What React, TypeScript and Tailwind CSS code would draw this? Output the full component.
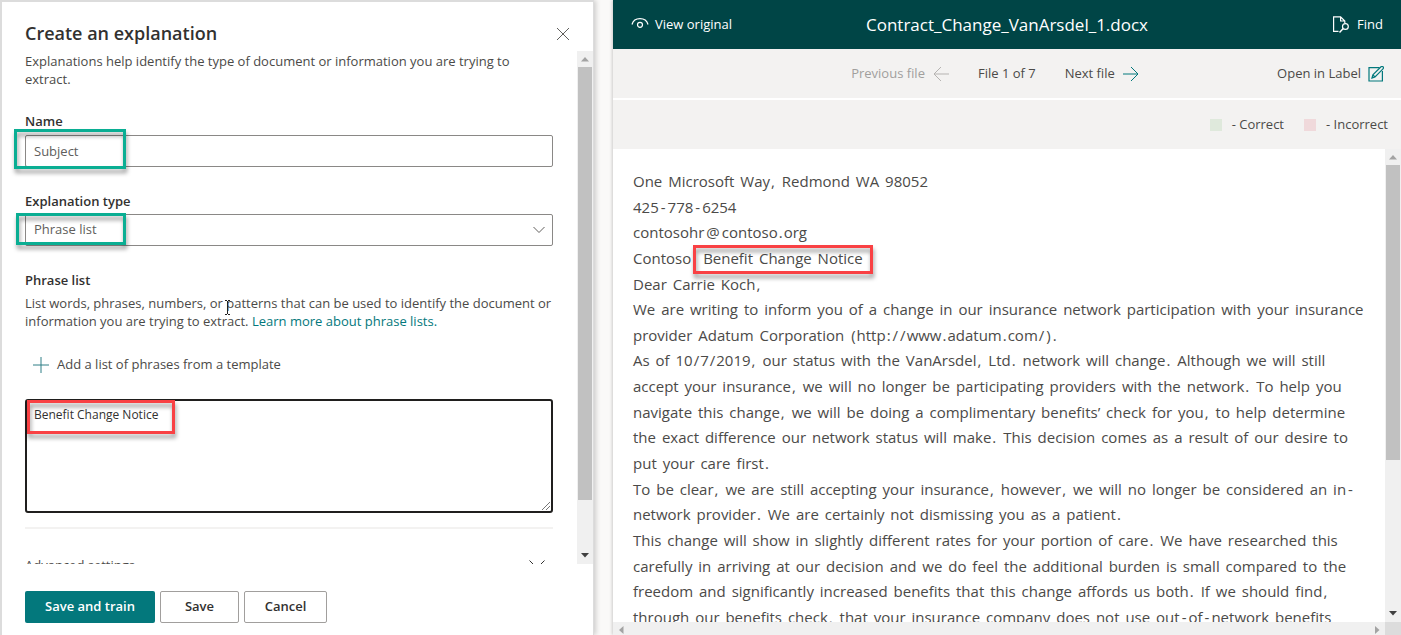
import type { ReactNode } from "react";

const LINES = [
  "One Microsoft Way, Redmond WA 98052",
  "425-778-6254",
  "contosohr@contoso.org",
  "Contoso [Benefit Change Notice]",
  "Dear Carrie Koch,",
  "We are writing to inform you of a change in our insurance network participation with your insurance",
  "provider Adatum Corporation (http://www.adatum.com/).",
  "As of 10/7/2019, our status with the VanArsdel, Ltd. network will change. Although we will still",
  "accept your insurance, we will no longer be participating providers with the network. To help you",
  "navigate this change, we will be doing a complimentary benefits’ check for you, to help determine",
  "the exact difference our network status will make. This decision comes as a result of our desire to",
  "put your care first.",
  "To be clear, we are still accepting your insurance, however, we will no longer be considered an in-",
  "network provider. We are certainly not dismissing you as a patient.",
  "This change will show in slightly different rates for your portion of care. We have researched this",
  "carefully in arriving at our decision and we do feel the additional burden is small compared to the",
  "freedom and significantly increased benefits that this change affords us both. If we should find,",
  "through our benefits check, that your insurance company does not use out-of-network benefits",
];

/** Marks a region with a coloured frame drawn over the content. */
function Callout({ className }: { className: string }) {
  return (
    <span
      aria-hidden="true"
      className={`pointer-events-none absolute border-3 drop-shadow-[1px_4px_2px_rgba(0,0,0,0.4)] ${className}`}
    />
  );
}

/** Splits a word so that its punctuation marks become tokens of their own. */
function Word({ text }: { text: string }) {
  return (
    <span className="mr-0.5">
      {text
        .split(/([-@/.,:()])/)
        .filter(Boolean)
        .map((part, i) =>
          /^[-@]$/.test(part) ? (
            <span key={i} className="mx-0.5">{part}</span>
          ) : /^[/.,:()]$/.test(part) ? (
            <span key={i} className="mx-px">{part}</span>
          ) : (
            part
          ),
        )}
    </span>
  );
}

function words(text: string): ReactNode[] {
  return text
    .split(" ")
    .filter(Boolean)
    .flatMap((w, i) => (i ? [" ", <Word key={i} text={w} />] : [<Word key={i} text={w} />]));
}

function Line({ text }: { text: string }) {
  const marked = text.match(/^(.*)\[(.*)\]$/);
  if (!marked) return <p>{words(text)}</p>;
  return (
    <p>
      {words(marked[1])}{" "}
      <span className="relative ml-1.5 inline-block">
        {words(marked[2])}
        <Callout className="-right-2 -left-2.5 -top-px -bottom-0.5 border-[#f94144]" />
      </span>
    </p>
  );
}

function Arrow({ d, className }: { d: string; className: string }) {
  return (
    <svg viewBox="0 0 16 16" className={`size-4 shrink-0 ${className}`} fill="currentColor" aria-hidden="true">
      <path d={d} />
    </svg>
  );
}

const UP = "M4 10.5 8 6l4 4.500z";
const DOWN = "M4 5 12 5 8 9.500z";
const LEFT = "M10.500 4v8L6 8z";
const RIGHT = "M6 4v8l4.500-4z";

function VerticalScrollbar({ thumb }: { thumb: string }) {
  return (
    <div className="flex w-4 shrink-0 flex-col bg-[#f0f0f0]" aria-hidden="true">
      <Arrow d={UP} className="text-[#a3a3a3]" />
      <div className={`mx-px bg-[#c1c1c1] ${thumb}`} />
      <Arrow d={DOWN} className="mt-auto text-[#404040]" />
    </div>
  );
}

function ExplanationPanel() {
  return (
    <section className="flex w-[594px] shrink-0 flex-col border-t-2 border-r border-l-2 border-[#dcdcdc] bg-white shadow-[2px_0_5px_rgba(0,0,0,0.18)]">
      <header className="flex h-[49px] shrink-0 items-end justify-between pr-[21px] pb-1 pl-[23px]">
        <h1 className="text-[18px] leading-7 font-semibold text-[#323130]">Create an explanation</h1>
        <button type="button" aria-label="Close" className="mb-1 p-0.5 text-[#605e5c]">
          <svg viewBox="0 0 14 14" className="size-3.5" fill="none" stroke="currentColor" aria-hidden="true">
            <path d="M1 1l12 12M13 1L1 13" />
          </svg>
        </button>
      </header>

      <div className="flex min-h-0 flex-1">
        <div className="min-w-0 flex-1 overflow-hidden pr-6 pl-[23px]">
          <p className="pt-px leading-[18px]">
            Explanations help identify the type of document or information you are trying to extract.
          </p>

          <label htmlFor="name" className="mt-[23px] block leading-5 font-semibold text-[#323130]">
            Name
          </label>
          <div className="relative mt-1">
            <input
              id="name"
              defaultValue="Subject"
              className="block h-8 w-full rounded-xs border border-[#8a8886] bg-white px-2 text-[#605e5c] outline-none"
            />
            <Callout className="-top-1.5 -left-[11px] h-10 w-28 border-[#0aae93]" />
          </div>

          <label htmlFor="type" className="mt-6 block leading-5 font-semibold text-[#323130]">
            Explanation type
          </label>
          <div className="relative mt-[3px]">
            <select
              id="type"
              className="block h-8 w-full appearance-none rounded-xs border border-[#8a8886] bg-white px-2 text-[#605e5c] outline-none"
            >
              <option>Phrase list</option>
            </select>
            <svg
              viewBox="0 0 12 8"
              className="pointer-events-none absolute top-3 right-2 h-2 w-3"
              fill="none"
              stroke="#605e5c"
              aria-hidden="true"
            >
              <path d="M.5 1 6 6.500 11.500 1" />
            </svg>
            <Callout className="-top-px -left-[9px] h-8 w-[110px] border-[#0aae93]" />
          </div>

          <label htmlFor="phrases" className="mt-6 block leading-5 font-semibold text-[#323130]">
            Phrase list
          </label>
          <div className="relative mt-1">
            <p className="leading-[18px] whitespace-nowrap">
              List words, phrases, numbers, or patterns that can be used to identify the document or
              <br />
              information you are trying to extract.{" "}
              <a href="#phrase-lists" className="text-[#03787c]">
                Learn more about phrase lists.
              </a>
            </p>
            <svg
              viewBox="0 0 7 16"
              className="pointer-events-none absolute top-1.5 left-[199px] h-4 w-[7px]"
              fill="none"
              stroke="#222"
              aria-hidden="true"
            >
              <path d="M1 .5h2M4 .5h2M3.500 1v13M1 14.500h2M4 14.500h2" />
            </svg>
          </div>

          <button type="button" className="mt-[19px] flex h-8 items-center gap-2 px-2">
            <svg viewBox="0 0 16 16" className="size-4" fill="none" stroke="#2f7f86" aria-hidden="true">
              <path d="M8 0v16M0 8h16" />
            </svg>
            Add a list of phrases from a template
          </button>

          <div className="relative mt-[18px]">
            <textarea
              id="phrases"
              defaultValue="Benefit Change Notice"
              className="block h-[114px] w-full resize-none rounded-[3px] border-2 border-[#201f1e] bg-white px-[7px] py-[5px] text-[12px] leading-[18px] text-[#323130] outline-none"
            />
            <svg
              viewBox="0 0 10 10"
              className="pointer-events-none absolute right-0.5 bottom-0.5 size-2.5"
              fill="none"
              stroke="#777"
              aria-hidden="true"
            >
              <path d="M1 9 9 1M5 9 9 5" />
            </svg>
            <Callout className="top-px left-0.5 h-[34px] w-[148px] border-[#f94144]" />
          </div>

          <hr className="mt-3.5 border-t-2 border-[#f3f2f1]" />
          <button type="button" className="mt-[26px] flex w-full items-center justify-between pr-2 leading-5">
            Advanced settings
            <svg viewBox="0 0 16 10" className="h-2.5 w-4" fill="none" stroke="#323130" aria-hidden="true">
              <path d="M.5 .5 8 8l7.500-7.500" />
            </svg>
          </button>
        </div>
        <VerticalScrollbar thumb="h-[433px]" />
      </div>

      <footer className="flex h-[71px] shrink-0 items-start gap-[5px] pt-[27px] pl-[23px] font-semibold">
        <button type="button" className="h-8 rounded-xs bg-[#03787c] px-5 text-white">
          Save and train
        </button>
        <button type="button" className="h-8 w-[79px] rounded-xs border border-[#a19f9d] text-[#323130]">
          Save
        </button>
        <button type="button" className="h-8 w-[83px] rounded-xs border border-[#a19f9d] text-[#323130]">
          Cancel
        </button>
      </footer>
    </section>
  );
}

function DocumentViewer() {
  return (
    <section className="flex min-w-0 flex-1 flex-col bg-white shadow-[-1px_0_3px_rgba(0,0,0,0.18)]">
      <header className="grid h-[49px] shrink-0 grid-cols-[1fr_auto_1fr] items-center bg-[#004546] px-[18px] text-white">
        <button type="button" className="flex items-center gap-1.5 justify-self-start">
          <svg viewBox="0 0 18 16" className="h-4 w-[18px]" fill="none" stroke="currentColor" strokeWidth="1.200" aria-hidden="true">
            <path d="M1 7.500C2 3.800 5 1.600 9 1.600s7 2.200 8 5.900" />
            <circle cx="9" cy="7.800" r="2.500" />
          </svg>
          View original
        </button>
        <h2 className="text-[17px] leading-6">Contract_Change_VanArsdel_1.docx</h2>
        <button type="button" className="flex items-center gap-[7px] justify-self-end">
          <svg viewBox="0 0 18 18" className="size-[18px]" fill="none" stroke="currentColor" strokeWidth="1.200" aria-hidden="true">
            <path d="M6.500 15.400H1.600V.8h7l4.200 4.200v2M8.600.8V5h4.200" />
            <circle cx="13.400" cy="10.500" r="2.900" />
            <path d="M11.200 12.600 7.500 16.500" strokeWidth="1.500" />
          </svg>
          Find
        </button>
      </header>

      <nav className="grid h-[49px] shrink-0 grid-cols-[1fr_auto_1fr] items-center bg-[#f3f2f1] px-[17px]">
        <div className="col-start-2 flex items-center gap-[29px] pr-6">
          <button type="button" disabled className="flex items-center gap-2 text-[#a19f9d]">
            Previous file
            <svg viewBox="0 0 16 16" className="size-4" fill="none" stroke="#b5b3b1" aria-hidden="true">
              <path d="M16 8H1M8 1 1 8l7 7" />
            </svg>
          </button>
          <span>File 1 of 7</span>
          <button type="button" className="flex items-center gap-2">
            Next file
            <svg viewBox="0 0 16 16" className="size-4" fill="none" stroke="#03787c" aria-hidden="true">
              <path d="M0 8h15M8 1l7 7-7 7" />
            </svg>
          </button>
        </div>
        <button type="button" className="flex items-center gap-[7px] justify-self-end">
          Open in Label
          <svg viewBox="0 0 16 16" className="size-4" fill="none" stroke="#03787c" strokeWidth="1.200" aria-hidden="true">
            <path d="M11.500 1.600H1v13.400h13.400V5" />
            <path d="M4 12l.9-3.200L13 .8c.6-.6 1.500-.6 2 0 .6.500.6 1.400 0 2L7 11zM4.900 8.800 7 11" />
          </svg>
        </button>
      </nav>

      <div className="mt-0.5 flex h-[49px] shrink-0 items-center justify-end gap-5 bg-[#f3f2f1] pr-[13px]">
        <span className="flex items-center gap-2.5">
          <span className="size-3 bg-[#dfe9dc]" />- Correct
        </span>
        <span className="flex items-center gap-2.5">
          <span className="size-3 bg-[#f0d9db]" />- Incorrect
        </span>
      </div>

      <div className="flex min-h-0 flex-1">
        <article className="min-w-0 flex-1 overflow-hidden pt-5 pl-5 text-[15px] leading-[1.710] whitespace-nowrap">
          {LINES.map((line) => (
            <Line key={line} text={line} />
          ))}
        </article>
        <VerticalScrollbar thumb="h-[295px]" />
      </div>
      <div className="flex h-[13px] shrink-0 overflow-hidden bg-[#f0f0f0]" aria-hidden="true">
        <Arrow d={LEFT} className="text-[#a3a3a3]" />
        <Arrow d={RIGHT} className="ml-auto text-[#a3a3a3]" />
        <span className="w-4 bg-[#dcdcdc]" />
      </div>
    </section>
  );
}

export default function App() {
  return (
    <main className="flex h-screen gap-[19px] overflow-hidden bg-[#faf9f8] font-['Open_Sans','Noto_Sans',sans-serif] text-[13px] text-[#4b4a48]">
      <ExplanationPanel />
      <DocumentViewer />
    </main>
  );
}
